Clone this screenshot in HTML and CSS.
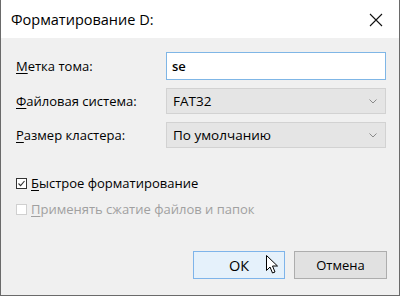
FILE: index.html
```html
<!DOCTYPE html>
<html lang="ru">
<head>
<meta charset="utf-8">
<link rel="stylesheet" href="styles.css">
</head>
<body>
<div class="window">
  <div class="titlebar">
    <span class="title">Форматирование D:</span>
    <svg class="close" width="14" height="14" viewBox="0 0 14 14"><path d="M1 1 L13 13 M13 1 L1 13" stroke="#111" stroke-width="1.1" fill="none"/></svg>
  </div>
  <div class="body">
    <div class="form">
      <label class="label"><u>М</u>етка тома:</label>
      <div class="input">se</div>
      <label class="label"><u>Ф</u>айловая система:</label>
      <div class="select"><span>FAT32</span><svg class="chev" width="8" height="5" viewBox="0 0 8 5"><path d="M0.5 0.5 L4 4 L7.5 0.5" stroke="#8a8a8a" stroke-width="1" fill="none"/></svg></div>
      <label class="label"><u>Р</u>азмер кластера:</label>
      <div class="select"><span>По умолчанию</span><svg class="chev" width="8" height="5" viewBox="0 0 8 5"><path d="M0.5 0.5 L4 4 L7.5 0.5" stroke="#8a8a8a" stroke-width="1" fill="none"/></svg></div>
    </div>
    <div class="checks">
      <div class="check"><span class="box"><svg width="9" height="9" viewBox="0 0 9 9"><path d="M1.5 4.5 L3.6 6.6 L7.5 2" stroke="#333" stroke-width="1.1" fill="none"/></svg></span><span><u>Б</u>ыстрое форматирование</span></div>
      <div class="check disabled"><span class="box"></span><span><u>П</u>рименять сжатие файлов и папок</span></div>
    </div>
    <div class="buttons">
      <div class="btn default">ОК</div>
      <div class="btn">Отмена</div>
    </div>
    <svg class="cursor" width="13" height="20" viewBox="0 0 13 20"><path d="M0.5 0.5 L0.5 15.5 L4 12 L6.5 18 L9 17 L6.5 11 L11.5 11 Z" fill="#fff" stroke="#000" stroke-width="1" stroke-linejoin="miter"/></svg>
  </div>
</div>
</body>
</html>
```
FILE: styles.css
```css
* { box-sizing: border-box; }
html, body { margin: 0; padding: 0; }
body {
  width: 400px;
  height: 296px;
  font-family: "Open Sans", "Noto Sans", sans-serif;
  font-size: 13px;
  color: #000;
  background: #fff;
}
u { text-decoration: underline; text-underline-offset: 2px; text-decoration-thickness: 1px; }
.window {
  width: 400px;
  height: 296px;
  border: 1px solid #6a6a6a;
  border-top: none;
  display: flex;
  flex-direction: column;
  position: relative;
}
.titlebar {
  height: 38px;
  background: #fff;
  display: flex;
  align-items: center;
  justify-content: space-between;
  padding: 0 16px 0 10px;
  flex: none;
}
.title { font-size: 14.5px; }
.close { margin-top: 1px; }
.body {
  flex: 1;
  background: #f0f0f0;
  padding: 14px 12px 0 15px;
  position: relative;
  display: flex;
  flex-direction: column;
}
.form {
  display: grid;
  grid-template-columns: 150px 220px;
  row-gap: 8px;
  align-items: center;
}
.label { font-size: 13px; }
.input {
  height: 28px;
  background: #fff;
  border: 1px solid #7fb6e6;
  padding: 0 5px;
  display: flex;
  align-items: center;
  font-weight: 600;
  font-size: 13px;
}
.select {
  height: 26px;
  background: #e5e5e5;
  border: 1px solid #d2d2d2;
  padding: 0 8px 0 6px;
  display: flex;
  align-items: center;
  justify-content: space-between;
  font-size: 13.5px;
}
.checks {
  margin-top: 26px;
  display: flex;
  flex-direction: column;
  gap: 8px;
}
.check {
  display: flex;
  align-items: center;
  gap: 4px;
  height: 18px;
}
.box {
  width: 11px;
  height: 11px;
  border: 1px solid #333;
  background: #fff;
  display: flex;
  align-items: center;
  justify-content: center;
}
.box svg { display: block; }
.disabled { color: #a0a0a0; }
.disabled .box { border-color: #d0d0d0; background: #fff; }
.buttons {
  margin-top: auto;
  margin-bottom: 16px;
  display: flex;
  justify-content: flex-end;
  gap: 9px;
}
.btn {
  width: 93px;
  height: 28px;
  border: 1px solid #adadad;
  background: #e1e1e1;
  display: flex;
  align-items: center;
  justify-content: center;
  font-size: 13px;
}
.btn.default {
  width: 92px;
  border-color: #7eb4ea;
  background: #e5f1fb;
  font-size: 14.5px;
}
.cursor {
  position: absolute;
  left: 265px;
  top: 217px;
}
```
